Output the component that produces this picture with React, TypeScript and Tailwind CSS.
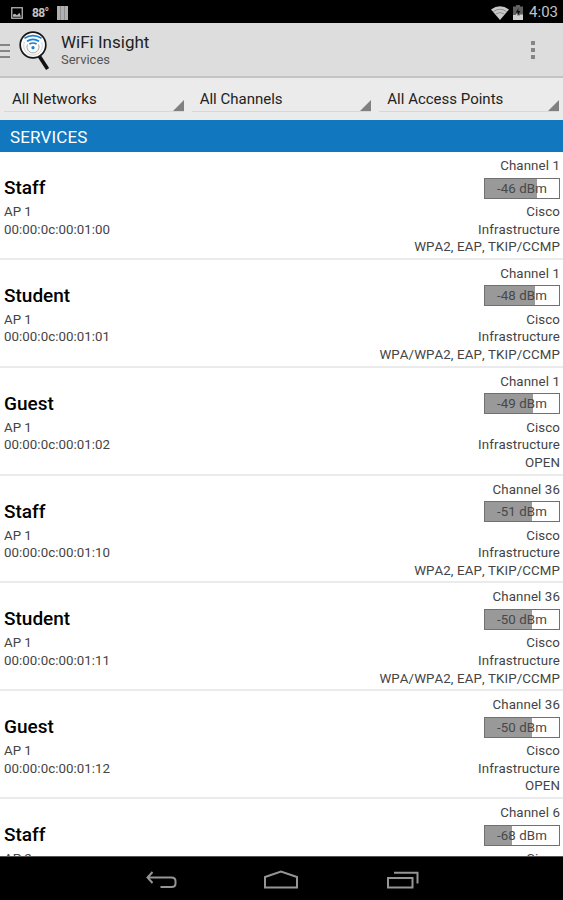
import clsx from "clsx";

type Service = {
  name: string;
  ap: string;
  mac: string;
  channel: number;
  signal: number;
  level: number;
  security: string;
};

const services: Service[] = [
  { name: "Staff", ap: "AP 1", mac: "00:00:0c:00:01:00", channel: 1, signal: -46, level: 70, security: "WPA2, EAP, TKIP/CCMP" },
  { name: "Student", ap: "AP 1", mac: "00:00:0c:00:01:01", channel: 1, signal: -48, level: 67, security: "WPA/WPA2, EAP, TKIP/CCMP" },
  { name: "Guest", ap: "AP 1", mac: "00:00:0c:00:01:02", channel: 1, signal: -49, level: 65, security: "OPEN" },
  { name: "Staff", ap: "AP 1", mac: "00:00:0c:00:01:10", channel: 36, signal: -51, level: 63, security: "WPA2, EAP, TKIP/CCMP" },
  { name: "Student", ap: "AP 1", mac: "00:00:0c:00:01:11", channel: 36, signal: -50, level: 64, security: "WPA/WPA2, EAP, TKIP/CCMP" },
  { name: "Guest", ap: "AP 1", mac: "00:00:0c:00:01:12", channel: 36, signal: -50, level: 64, security: "OPEN" },
  { name: "Staff", ap: "AP 2", mac: "00:00:0c:00:02:00", channel: 6, signal: -68, level: 37, security: "WPA2, EAP, TKIP/CCMP" },
];

const filters = ["All Networks", "All Channels", "All Access Points"];

function StatusBar() {
  return (
    <div className="flex h-[23px] shrink-0 items-center justify-between bg-black pt-0.5 pr-[5px] pl-[11px] text-[#c4c4c4]">
      <div className="flex items-center">
        <svg width="12" height="12" viewBox="0 0 12 12">
          <rect x="0.75" y="0.75" width="10.5" height="10.5" fill="none" stroke="#b5b5b5" strokeWidth="1.3" />
          <path d="M2 9.8V7.5L4 6.8 6 8.3 8.5 5.7 10 9.8Z" fill="#b5b5b5" />
        </svg>
        <span className="ml-[9px] w-[16px] text-[12px] leading-none font-bold tracking-[-0.6px]">88°</span>
        <svg className="ml-[9px]" width="11" height="14" viewBox="0 0 11 14">
          <path d="M0 0H11V14H0Z" fill="#b0b0b0" />
          <path d="M3.5 0V14M7.5 0V14" stroke="#808080" strokeWidth="0.7" />
        </svg>
      </div>
      <div className="flex items-center">
        <svg width="18" height="14" viewBox="0 0 18 14">
          <path d="M0 3.5Q9-3 18 3.5L9 14Z" fill="#c8c8c8" />
          <path d="M2.5 5.5Q9 1 15.5 5.5M4.5 8Q9 5 13.5 8" fill="none" stroke="#777" strokeWidth="0.7" />
        </svg>
        <svg className="ml-[4px]" width="10" height="15" viewBox="0 0 10 15">
          <path d="M3 0H7V1.5H10V15H0V1.5H3Z" fill="#606060" />
          <path d="M0 10H2.5L4 8.5 6 11 7 9.5H10V15H0Z" fill="#d0d0d0" />
          <path d="M5.5 3 2.8 7.5H5L4.5 11 7.4 6H5.2Z" fill="#111" />
        </svg>
        <span className="ml-[6px] text-[15px] leading-none">4:03</span>
      </div>
    </div>
  );
}

function Logo() {
  return (
    <svg width="32" height="40" viewBox="0 0 32 40">
      <circle cx="14" cy="14" r="12.8" fill="#fcfcfc" stroke="#161616" strokeWidth="1.7" />
      <g fill="none" stroke="#999" strokeWidth="0.9">
        <path d="M8.5 13.5A6 6 0 1 0 19.5 13.5" />
        <path d="M5.5 11A9.3 9.3 0 1 0 22.5 11" stroke="#ccc" />
      </g>
      <g fill="none" stroke="#1b7fd0" strokeWidth="1.7">
        <path d="M5.5 7.2Q14 2 22.5 7.2" />
        <path d="M8 10.2Q14 6.5 20 10.2" />
        <path d="M10.4 13Q14 11 17.6 13" />
      </g>
      <circle cx="14" cy="16.7" r="1.6" fill="#1b7fd0" />
      <path d="M20.5 25.5 28.6 38" stroke="#111" strokeWidth="3.6" />
    </svg>
  );
}

function ActionBar() {
  return (
    <div className="flex h-[55px] shrink-0 items-center border-b-2 border-[#c3c3c3] bg-[#dddddd]">
      <div className="flex w-[10px] flex-col gap-[4px] pt-[2px]">
        <div className="h-[2px] bg-[#858585]" />
        <div className="h-[2px] bg-[#858585]" />
        <div className="h-[2px] bg-[#858585]" />
      </div>
      <div className="ml-[9px] pt-[2px]">
        <Logo />
      </div>
      <div className="ml-[10px] flex-1 pt-[2px]">
        <h1 className="text-[17px] leading-[19px] text-[#222]">WiFi Insight</h1>
        <p className="text-[13px] leading-[16px] text-[#555]">Services</p>
      </div>
      <div className="mr-[28px] flex flex-col gap-[3px] pt-px">
        <div className="size-[4px] bg-[#858585]" />
        <div className="size-[4px] bg-[#858585]" />
        <div className="size-[4px] bg-[#858585]" />
      </div>
    </div>
  );
}

function FilterBar() {
  return (
    <div className="grid h-[42px] shrink-0 grid-cols-3 bg-[#ebebeb]">
      {filters.map((filter) => (
        <div key={filter} className="mt-[3px] mr-[4px] ml-[4px] flex h-[31px] justify-between border-b border-[#d8d8d8] pl-[8px]">
          <span className="pt-[7px] text-[15px] leading-[22px] whitespace-nowrap text-[#222]">{filter}</span>
          <svg className="shrink-0 self-end" width="11" height="11" viewBox="0 0 11 11">
            <path d="M11 0V11H0Z" fill="#808080" />
          </svg>
        </div>
      ))}
    </div>
  );
}

function SignalBar({ signal, level }: { signal: number; level: number }) {
  return (
    <div className="relative h-[21px] w-[76px] border border-[#707070] bg-white">
      <div className="h-full bg-[#999]" style={{ width: `${level}%` }} />
      <span className="absolute inset-0 text-center text-[13.3px] leading-[20px] text-[#484848]">{signal} dBm</span>
    </div>
  );
}

function ServiceRow({ service, last }: { service: Service; last: boolean }) {
  return (
    <div
      className={clsx(
        "flex h-[107.85px] shrink-0 justify-between pr-[3px] pl-[4px] text-[13.3px] leading-[17.6px] text-[#444] [font-kerning:none]",
        !last && "border-b-2 border-[#ebebeb]"
      )}
    >
      <div className="pt-[23px]">
        <h2 className="mb-[3px] text-[19px] leading-[25px] font-medium text-black">{service.name}</h2>
        <p>{service.ap}</p>
        <p className="tracking-[0.05px]">{service.mac}</p>
      </div>
      <div className="flex flex-col items-end pt-[5px] tracking-[0.1px]">
        <p className="mb-[3px]">Channel {service.channel}</p>
        <SignalBar signal={service.signal} level={service.level} />
        <p className="mt-[4.4px]">Cisco</p>
        <p>Infrastructure</p>
        <p>{service.security}</p>
      </div>
    </div>
  );
}

function NavBar() {
  return (
    <div className="flex h-[44px] shrink-0 items-center justify-center border-t border-[#555] bg-black pt-[2px]">
      <svg className="mr-[86px]" width="32" height="20" viewBox="0 0 32 20" fill="none" stroke="#959595" strokeWidth="2">
        <path d="M7.5 2 2.5 7.5 7.5 13M3 7.5H26.5Q30.5 7.5 30.5 11V13.5Q30.5 17 26.5 17H15.5" />
      </svg>
      <svg className="mr-[87px]" width="36" height="20" viewBox="0 0 36 20" fill="none" stroke="#959595" strokeWidth="2">
        <path d="M2 17.5V7L18 1.5 34 7V17.5Z" />
      </svg>
      <svg width="33" height="20" viewBox="0 0 33 20" fill="none" stroke="#959595" strokeWidth="2">
        <path d="M2 8H26.5V17.5H2ZM8 2.8H31.5V13.5" />
      </svg>
    </div>
  );
}

export default function App() {
  return (
    <div className="flex h-[900px] w-[563px] flex-col overflow-hidden bg-white font-['Roboto',sans-serif]">
      <StatusBar />
      <ActionBar />
      <FilterBar />
      <div className="h-[32px] shrink-0 bg-[#1177bf] pl-[10px] text-[17px] leading-[34px] tracking-[0.15px] text-white">SERVICES</div>
      <div className="flex min-h-0 flex-1 flex-col overflow-hidden">
        {services.map((service, idx) => (
          <ServiceRow key={service.mac} service={service} last={idx === services.length - 1} />
        ))}
      </div>
      <NavBar />
    </div>
  );
}
